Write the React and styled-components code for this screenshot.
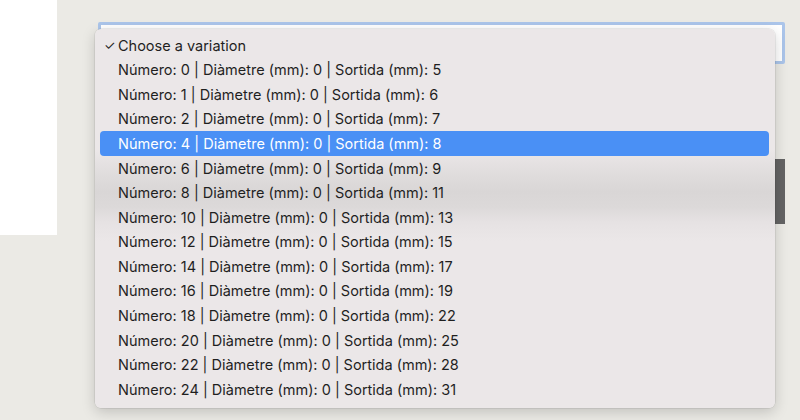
import React from "react";
import styled, { createGlobalStyle } from "styled-components";

const options = [
  [0, 5], [1, 6], [2, 7], [4, 8], [6, 9], [8, 11], [10, 13], [12, 15],
  [14, 17], [16, 19], [18, 22], [20, 25], [22, 28], [24, 31],
];

const selectedNumber = 4;

function App() {
  return (
    <>
      <GlobalStyle />
      <PageStyled>
        <SidebarStyled />
        <MainStyled>
          <SelectStyled />
          <ButtonStyled />
          <MenuStyled>
            <OptionStyled>
              <CheckStyled>✓</CheckStyled>
              Choose a variation
            </OptionStyled>
            {options.map(([num, out]) => (
              <OptionStyled key={num} $active={num === selectedNumber}>
                Número: {num} | Diàmetre (mm): 0 | Sortida (mm): {out}
              </OptionStyled>
            ))}
          </MenuStyled>
        </MainStyled>
      </PageStyled>
    </>
  );
}

const GlobalStyle = createGlobalStyle`
    body {
        margin: 0;
        background: #ebeae5;
        font-family: Inter, "Noto Sans", sans-serif;
    }
`

const PageStyled = styled.div`
    display: flex;
    width: 800px;
    height: 420px;
    overflow: hidden;
`

const SidebarStyled = styled.div`
    width: 57px;
    height: 235px;
    background: #ffffff;
    flex-shrink: 0;
`

const MainStyled = styled.div`
    position: relative;
    flex: 1;
    display: flex;
    flex-direction: column;
    align-items: flex-start;
    padding: 22px 15px 0 41px;
`

const SelectStyled = styled.div`
    width: 681px;
    height: 36px;
    border: 3px solid #abc5ea;
    border-radius: 2px;
    background: #ffffff;
`

const ButtonStyled = styled.div`
    align-self: flex-end;
    margin-top: 95px;
    width: 120px;
    height: 65px;
    background: #646464;
`

const MenuStyled = styled.div`
    position: absolute;
    top: 29px;
    left: 38px;
    width: 680px;
    height: 379px;
    box-sizing: border-box;
    padding: 4px 6px 6px 5px;
    border-radius: 6px;
    background: linear-gradient(
        to bottom,
        #ebe7e8 0%,
        #ebe7e8 32%,
        #e0dddd 38%,
        #d9d6d6 43%,
        #dcd9d9 47%,
        #e6e2e3 51%,
        #ebe7e8 56%,
        #ebe7e8 100%
    );
    box-shadow: 0 0 0 0.5px rgba(0, 0, 0, 0.12), 0 4px 14px rgba(0, 0, 0, 0.18);
    display: flex;
    flex-direction: column;
`

const OptionStyled = styled.div`
    position: relative;
    height: 24.57px;
    display: flex;
    align-items: center;
    padding-left: 18px;
    border-radius: 4px;
    font-size: 14.5px;
    color: ${props => (props.$active ? "#ffffff" : "#1f1f1f")};
    background: ${props => (props.$active ? "#4a90f5" : "transparent")};
    white-space: nowrap;
`

const CheckStyled = styled.span`
    position: absolute;
    left: 4px;
    font-size: 13px;
`

export default App;
